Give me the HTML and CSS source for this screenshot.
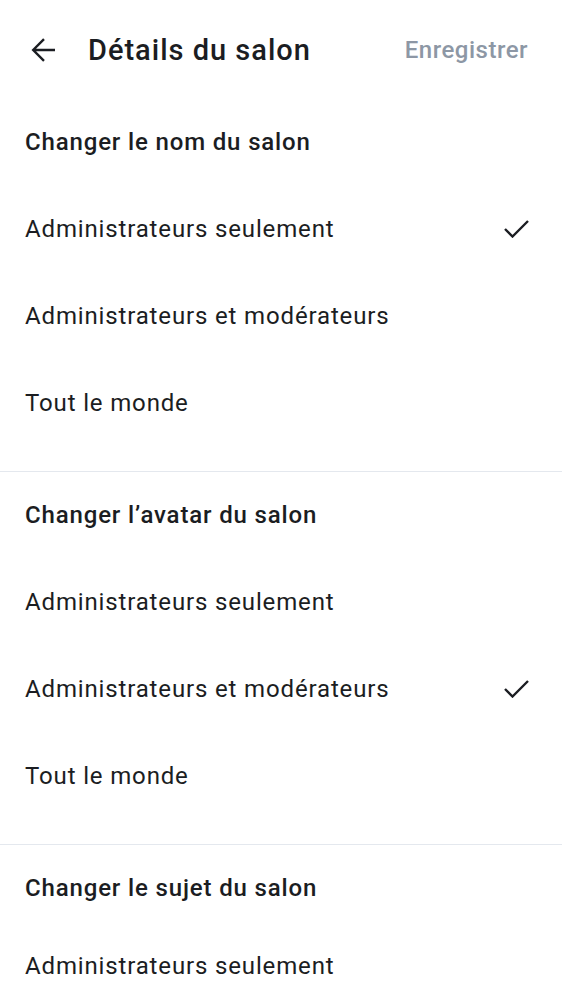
FILE: index.html
```html
<!DOCTYPE html>
<html lang="fr">
<head>
<meta charset="utf-8">
<title>Détails du salon</title>
<link rel="stylesheet" href="styles.css">
</head>
<body>
<header class="topbar">
  <svg class="back" width="26" height="26" viewBox="0 0 26 26" aria-hidden="true">
    <path d="M24 13H2.5 M13 2.2 L2.2 13 L13 23.8" fill="none" stroke="#1b1d22" stroke-width="2.4" stroke-linecap="butt" stroke-linejoin="miter"/>
  </svg>
  <h1 class="title">Détails du salon</h1>
  <span class="save">Enregistrer</span>
</header>

<section class="section">
  <div class="heading">Changer le nom du salon</div>
  <div class="option"><span>Administrateurs seulement</span>
    <svg class="check" width="26" height="18" viewBox="0 0 26 18" aria-hidden="true"><path d="M1 9 L8.5 16.5 L24 1" fill="none" stroke="#1b1d22" stroke-width="2.4"/></svg>
  </div>
  <div class="option"><span>Administrateurs et modérateurs</span></div>
  <div class="option"><span>Tout le monde</span></div>
</section>

<section class="section">
  <div class="heading">Changer l’avatar du salon</div>
  <div class="option"><span>Administrateurs seulement</span></div>
  <div class="option"><span>Administrateurs et modérateurs</span>
    <svg class="check" width="26" height="18" viewBox="0 0 26 18" aria-hidden="true"><path d="M1 9 L8.5 16.5 L24 1" fill="none" stroke="#1b1d22" stroke-width="2.4"/></svg>
  </div>
  <div class="option"><span>Tout le monde</span></div>
</section>

<section class="section section-last">
  <div class="heading heading-tight">Changer le sujet du salon</div>
  <div class="option"><span>Administrateurs seulement</span></div>
</section>
</body>
</html>
```

FILE: styles.css
```css
html, body {
  margin: 0;
  padding: 0;
  background: #ffffff;
}
body {
  font-family: Roboto, "Noto Sans", sans-serif;
  color: #1b1d22;
  overflow: hidden;
  height: 1000px;
}
.topbar {
  height: 99px;
  display: flex;
  align-items: center;
  padding: 0 34px 0 31px;
}
.back {
  flex: none;
  display: block;
}
.title {
  margin: 0 0 0 31px;
  font-size: 29px;
  font-weight: 500;
  letter-spacing: 1px;
  flex: 1;
}
.save {
  font-size: 24px;
  font-weight: 500;
  letter-spacing: 0.5px;
  color: #8d97a5;
}
.section {
  border-bottom: 1px solid #e4e8ee;
  padding-bottom: 25px;
}
.section-last {
  border-bottom: 0;
  padding-bottom: 0;
}
.heading {
  box-sizing: border-box;
  height: 86px;
  display: flex;
  align-items: center;
  padding: 0 25px;
  font-size: 24px;
  font-weight: 500;
  letter-spacing: 0.85px;
}
.heading-tight {
  height: 77px;
  align-items: flex-start;
  padding-top: 29px;
}
.option {
  height: 87px;
  display: flex;
  align-items: center;
  justify-content: space-between;
  padding: 0 32px 0 25px;
  font-size: 24px;
  font-weight: 400;
  letter-spacing: 0.85px;
}
.check {
  display: block;
  flex: none;
}
```
